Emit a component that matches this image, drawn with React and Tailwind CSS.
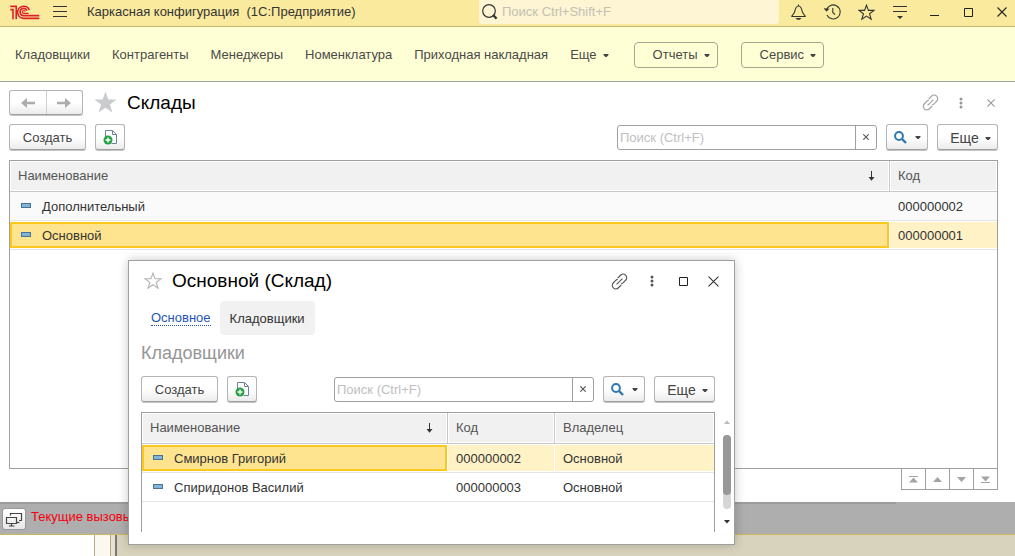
import React from 'react';

const warehouses = [
  { name: 'Дополнительный', code: '000000002' },
  { name: 'Основной', code: '000000001', selected: true },
];

const keepers = [
  { name: 'Смирнов Григорий', code: '000000002', owner: 'Основной', selected: true },
  { name: 'Спиридонов Василий', code: '000000003', owner: 'Основной' },
];

const raised =
  'rounded-[3px] border border-[#b4b4b4] border-b-[#a0a0a0] bg-linear-to-b from-white from-50% to-[#ececec] shadow-[0_1px_0_#c4c4c4]';

function Caret() {
  return (
    <svg width="6" height="6" viewBox="0 0 6 6" aria-hidden="true">
      <path d="M0.5 2h5v1L3.6 5H2.4L0.5 3z" fill="#444" />
    </svg>
  );
}

function Logo() {
  return (
    <svg width="30" height="16" viewBox="0 0 30 16" fill="none" stroke="#dc2229" strokeWidth="1.6" aria-hidden="true">
      <path d="M0.3 5.6H3V15.2" />
      <path d="M0.3 2.4H6.2V15.2" />
      <path d="M19.4 6A6.1 6.1 0 1 0 13.9 14.4H29.3" />
      <path d="M17 6.6A3.6 3.6 0 1 0 13.9 11.6H29.3" />
      <path d="M15.2 7.6A1.4 1.4 0 1 0 14 9.3H18.6" strokeWidth="1.2" />
    </svg>
  );
}

function Star({ size, fill = 'none', stroke }) {
  return (
    <svg width={size} height={size} viewBox="0 0 24 24" fill={fill} stroke={stroke} strokeWidth="1.5" aria-hidden="true">
      <path d="M12 1.5 14.7 9H22.6L16.3 13.8 18.6 21.6 12 17 5.4 21.6 7.7 13.8 1.4 9H9.3z" />
    </svg>
  );
}

function LinkIcon({ color }) {
  return (
    <svg width="17" height="17" viewBox="0 0 17 17" fill="none" stroke={color} strokeWidth="1.1" aria-hidden="true">
      <path d="M7 5.2V4.8L9.8 2A3.3 3.3 0 0 1 14.6 2.2 3.3 3.3 0 0 1 14.8 7L12 9.8A3 3 0 0 1 10.2 10.6" />
      <path d="M10 11.8V12.2L7.2 15A3.3 3.3 0 0 1 2.4 14.8 3.3 3.3 0 0 1 2.2 10L5 7.2A3 3 0 0 1 6.8 6.4" />
      <path d="M5.6 11.4 11.4 5.6" />
    </svg>
  );
}

function Dots({ color }) {
  return (
    <svg width="4" height="12" viewBox="0 0 4 12" fill={color} aria-hidden="true">
      <circle cx="2" cy="2" r="1.5" />
      <circle cx="2" cy="6" r="1.5" />
      <circle cx="2" cy="10" r="1.5" />
    </svg>
  );
}

function Cross({ size, color }) {
  return (
    <svg width={size} height={size} viewBox="0 0 10 10" stroke={color} strokeWidth={11 / size} aria-hidden="true">
      <path d="M0.5 0.5 9.5 9.5M9.5 0.5 0.5 9.5" />
    </svg>
  );
}

function Square() {
  return (
    <svg width="9" height="9" viewBox="0 0 9 9" fill="none" stroke="#222" aria-hidden="true">
      <path d="M0.5 0.5h8v8h-8z" />
    </svg>
  );
}

function Arrow({ flip }) {
  return (
    <svg width="14" height="10" viewBox="0 0 14 10" fill="#adadad" className={flip ? 'rotate-180' : ''} aria-hidden="true">
      <path d="M0 5 6 0V3.7H14V6.3H6V10z" />
    </svg>
  );
}

function CopyIcon() {
  return (
    <svg width="15" height="16" viewBox="0 0 15 16" fill="none" aria-hidden="true">
      <path d="M2.5 8V1.5H9.5L13.5 5.5V14.5H8.5" stroke="#6d8296" fill="white" />
      <path d="M9.5 1.5V5.5H13.5" stroke="#6d8296" />
      <circle cx="5" cy="11" r="4.5" fill="#28a045" />
      <path d="M5 8.5V13.5M2.5 11H7.5" stroke="white" strokeWidth="1.4" />
    </svg>
  );
}

function FindIcon() {
  return (
    <svg width="13" height="13" viewBox="0 0 13 13" fill="none" stroke="#2f78b0" aria-hidden="true">
      <circle cx="5" cy="5" r="3.9" strokeWidth="2" />
      <path d="M8 8 12 12" strokeWidth="2.4" />
    </svg>
  );
}

function Toolbar({ id }) {
  return (
    <div className="flex h-[26px] items-stretch">
      <button className={`${raised} w-[77px] pt-px text-[#444]`}>Создать</button>
      <button aria-label="Создать копированием" className={`${raised} ml-[9px] flex w-[30px] items-center justify-center`}>
        <CopyIcon />
      </button>
      <div className="ml-auto flex h-[25px] w-[260px] self-center rounded-[3px] border border-[#a0a0a0] bg-white">
        <input
          id={id}
          aria-label="Поиск"
          placeholder="Поиск (Ctrl+F)"
          className="min-w-0 flex-1 bg-transparent px-[2px] pt-px text-[13px] outline-none placeholder:text-[#c0c0c0]"
        />
        <button aria-label="Очистить" className="flex w-[21px] items-center justify-center border-l border-[#a0a0a0]">
          <Cross size={6} color="#555" />
        </button>
      </div>
      <button aria-label="Найти" className={`${raised} ml-[9px] flex w-[42px] items-center justify-center gap-2`}>
        <FindIcon />
        <Caret />
      </button>
      <button className={`${raised} ml-[9px] flex w-[61px] items-center justify-center gap-[6px] pt-px pl-[6px] text-[14px] text-[#444]`}>
        Еще
        <Caret />
      </button>
    </div>
  );
}

const th =
  'h-[31px] border-b border-[#c8c8c8] bg-[#f1f1f1] px-2 text-left font-normal text-[#555] shadow-[inset_0_0_0_1px_white]';

function Head({ children, sorted, last, className = '' }) {
  return (
    <th className={`${th} ${last ? '' : 'border-r'} ${className}`}>
      <div className="flex items-center justify-between">
        {children}
        {sorted && (
          <svg width="7" height="10" viewBox="0 0 7 10" className="mr-[6px]" aria-hidden="true">
            <path d="M3.5 0V8" stroke="#333" />
            <path d="M0.5 6H6.5L3.5 9.8z" fill="#333" />
          </svg>
        )}
      </div>
    </th>
  );
}

function NameCell({ row, striped }) {
  return (
    <td className={`h-[29px] border-b border-[#e4e4e4] p-0 ${striped ? 'bg-[#fafafa]' : ''}`}>
      <div
        className={`mr-px flex h-[26px] items-center gap-[11px] border-2 pl-[9px] ${
          row.selected ? 'border-[#fcc81e] bg-[#ffe48f]' : 'border-transparent'
        }`}
      >
        <span className="mb-px h-[5px] w-[10px] border border-[#4d7190] bg-[#7fb4dc]" />
        <span className="pt-px">{row.name}</span>
      </div>
    </td>
  );
}

function Cell({ row, striped, children, last }) {
  return (
    <td className={`h-[29px] border-b border-[#e4e4e4] p-0 ${striped ? 'bg-[#fafafa]' : ''}`}>
      <div
        className={`flex h-[26px] items-center pt-px pl-2 ${row.selected ? 'bg-[#fff2c6]' : ''} ${last ? '' : 'mr-px'}`}
      >
        {children}
      </div>
    </td>
  );
}

function Pager() {
  const icons = ['M0 6.5 4.5 1.5 9 6.5z', 'M0 6 4.5 1 9 6z', 'M0 1 4.5 6 9 1z', 'M0 0.5 4.5 5.5 9 0.5z'];
  const labels = ['В начало', 'Вверх', 'Вниз', 'В конец'];
  return (
    <div className="-mt-px flex self-end border-l border-[#a0a0a0]">
      {icons.map((d, i) => (
        <button
          key={labels[i]}
          aria-label={labels[i]}
          className="flex h-[22px] w-6 items-center justify-center border-y border-r border-[#a0a0a0]"
        >
          <svg width="9" height="7" viewBox="0 0 9 7" fill="#a4a4a4" aria-hidden="true">
            <path d={d} />
            {i === 0 && <path d="M0 0H9V1H0z" />}
            {i === 3 && <path d="M0 6H9V7H0z" />}
          </svg>
        </button>
      ))}
    </div>
  );
}

function TitleBar() {
  return (
    <header className="flex h-[27px] items-center border-b border-[#c9b870] bg-[#faea9d] pb-[2px] pl-[10px] text-[#333]">
      <Logo />
      <button aria-label="Меню" className="ml-[13px]">
        <svg width="14" height="12" viewBox="0 0 14 12" stroke="#333" aria-hidden="true">
          <path d="M0 0.5H14M0 5.5H14M0 10.5H14" />
        </svg>
      </button>
      <span className="ml-5 whitespace-pre">Каркасная конфигурация  (1С:Предприятие)</span>
      <label className="ml-auto flex h-6 w-[300px] items-center gap-1 self-start rounded-b-[3px] bg-[#fdf5d3] pl-[3px]">
        <svg width="16" height="16" viewBox="0 0 16 16" fill="none" stroke="#333" aria-hidden="true">
          <circle cx="7" cy="7" r="6.3" strokeWidth="1.2" />
          <path d="M11 11 14.6 14.6" strokeWidth="2.2" />
        </svg>
        <input
          aria-label="Поиск"
          placeholder="Поиск Ctrl+Shift+F"
          className="min-w-0 flex-1 bg-transparent text-[13px] outline-none placeholder:text-[#c4c0b4]"
        />
      </label>
      <div className="-mr-1 ml-[2px] grid w-[238px] grid-cols-7 place-items-center">
        <button aria-label="Уведомления">
          <svg width="15" height="16" viewBox="0 0 15 16" fill="none" stroke="#333" strokeWidth="1.1" aria-hidden="true">
            <path d="M7.5 0.5V2M0.8 12.5H14.2C14.2 11.2 12 10.6 11.3 7.6 10.6 4.2 9.6 2 7.5 2S4.4 4.2 3.7 7.6C3 10.6 0.8 11.2 0.8 12.5z" />
            <path d="M4.5 14H10.5L8.8 15.8H6.2z" fill="#333" stroke="none" />
          </svg>
        </button>
        <button aria-label="История">
          <svg width="17" height="16" viewBox="0 0 17 16" fill="none" stroke="#333" strokeWidth="1.1" aria-hidden="true">
            <path d="M2.4 6.2A7 7 0 1 1 2.9 11" />
            <path d="M0 4.2 2.4 7.2 5.2 4.8" fill="#333" strokeWidth="0.6" />
            <path d="M8.8 4V8.4L11 10.6" />
          </svg>
        </button>
        <button aria-label="Избранное">
          <Star size={17} stroke="#333" />
        </button>
        <button aria-label="Настройки">
          <svg width="14" height="14" viewBox="0 0 14 14" stroke="#333" aria-hidden="true">
            <path d="M0 1.5H14M0 6.5H14" />
            <path d="M4 11H10L7 14z" fill="#333" stroke="none" />
          </svg>
        </button>
        <button aria-label="Свернуть">
          <svg width="9" height="9" viewBox="0 0 9 9" stroke="#222" aria-hidden="true">
            <path d="M0 7.5H9" />
          </svg>
        </button>
        <button aria-label="Развернуть">
          <Square />
        </button>
        <button aria-label="Закрыть">
          <Cross size={10} color="#222" />
        </button>
      </div>
    </header>
  );
}

function SectionNav() {
  const items = ['Кладовщики', 'Контрагенты', 'Менеджеры', 'Номенклатура', 'Приходная накладная'];
  return (
    <nav className="flex h-[55px] items-center border-b border-[#a0a0a0] bg-[#ffffd5] pt-px pl-[15px] text-[#4a4a4a]">
      <div className="flex gap-[22px]">
        {items.map((item) => (
          <a key={item} href="#" className="whitespace-nowrap">
            {item}
          </a>
        ))}
        <button className="flex items-center gap-[6px]">
          Еще
          <Caret />
        </button>
      </div>
      <div className="ml-[25px] flex gap-[23px]">
        {['Отчеты', 'Сервис'].map((item) => (
          <button
            key={item}
            className="flex h-[26px] items-center gap-[6px] rounded-[4px] border border-[#a8a890] pr-[7px] pl-[18px]"
          >
            {item}
            <Caret />
          </button>
        ))}
      </div>
    </nav>
  );
}

function WarehousePage() {
  return (
    <main className="flex flex-col bg-white pt-2 pr-[17px] pb-3 pl-[9px]">
      <div className="flex h-[25px] items-center">
        <div className={`${raised} flex h-[25px] w-[74px]`}>
          <button aria-label="Назад" className="flex flex-1 items-center justify-center border-r border-[#d0d0d0]">
            <Arrow />
          </button>
          <button aria-label="Вперед" className="flex flex-1 items-center justify-center">
            <Arrow flip />
          </button>
        </div>
        <button aria-label="В избранное" className="ml-[10px]">
          <Star size={25} fill="#c9cbcd" stroke="none" />
        </button>
        <h1 className="ml-[9px] text-[19px] text-black">Склады</h1>
        <div className="ml-auto flex items-center">
          <button aria-label="Ссылка">
            <LinkIcon color="#a0a0a0" />
          </button>
          <button aria-label="Действия" className="ml-5">
            <Dots color="#999" />
          </button>
          <button aria-label="Закрыть" className="mr-[3px] ml-6">
            <Cross size={8} color="#999" />
          </button>
        </div>
      </div>
      <div className="mt-[9px]">
        <Toolbar id="find-warehouse" />
      </div>
      <div className="mt-[10px] min-h-[309px] border border-[#a0a0a0]">
        <table className="w-full table-fixed border-separate border-spacing-0">
          <thead>
            <tr>
              <Head sorted>Наименование</Head>
              <Head last className="w-[107px]">Код</Head>
            </tr>
          </thead>
          <tbody>
            {warehouses.map((row, i) => (
              <tr key={row.code}>
                <NameCell row={row} striped={i === 0} />
                <Cell row={row} striped={i === 0} last>
                  {row.code}
                </Cell>
              </tr>
            ))}
          </tbody>
        </table>
      </div>
      <Pager />
    </main>
  );
}

function StatusBar() {
  return (
    <div className="border-b border-[#cdb95c] bg-[#aeaeae]">
      <div className="h-[2px] w-[896px] max-w-full bg-[#9c9c9c]" />
      <div className="flex h-[30px] items-center pl-[2px]">
        <button
          aria-label="Окна"
          className="flex h-[22px] w-6 items-center justify-center rounded-[3px] border border-[#999] bg-linear-to-b from-white to-[#e8e8e8]"
        >
          <svg width="18" height="15" viewBox="0 0 18 15" fill="none" stroke="#444" strokeWidth="1.2" aria-hidden="true">
            <path d="M5.5 3.5V1.5H16.5V8.5H14" />
            <path d="M1.5 5.5H11.5V11.5H1.5zM6.5 11.5V14M4 14H9.5" />
            <path d="M12 10.5H14.5" />
          </svg>
        </button>
        <span className="ml-[5px] pb-1 whitespace-nowrap text-[#f5000f]">Текущие вызовы</span>
      </div>
    </div>
  );
}

function KeepersWindow() {
  return (
    <section
      aria-label="Основной (Склад)"
      className="absolute top-[260px] left-32 flex h-[285px] w-[607px] flex-col border border-[#a0a0a0] bg-white pr-[3px] pl-3 shadow-[0_0_10px_rgba(0,0,0,0.22)]"
    >
      <div className="flex h-10 items-center pr-3 pl-[3px]">
        <button aria-label="В избранное">
          <Star size={18} stroke="#b4b4b4" />
        </button>
        <h2 className="ml-[10px] text-[19px] text-black">Основной (Склад)</h2>
        <div className="ml-auto flex items-center">
          <button aria-label="Ссылка">
            <LinkIcon color="#555" />
          </button>
          <button aria-label="Действия" className="ml-[22px]">
            <Dots color="#555" />
          </button>
          <button aria-label="Развернуть" className="ml-[25px]">
            <Square />
          </button>
          <button aria-label="Закрыть" className="ml-5">
            <Cross size={11} color="#333" />
          </button>
        </div>
      </div>
      <div className="flex h-[34px] items-center pl-[10px]">
        <a href="#" className="border-b border-dotted border-[#1f55b5] pt-px leading-[14px] text-[#1f55b5]">
          Основное
        </a>
        <button className="ml-[9px] h-[34px] rounded-[4px] bg-[#f1f1f1] px-[10px] pt-px text-[#333]">Кладовщики</button>
      </div>
      <h3 className="mt-1 text-[18px] leading-[28px] text-[#969696]">Кладовщики</h3>
      <div className="mt-[9px] mr-4">
        <Toolbar id="find-keeper" />
      </div>
      <div className="mt-[10px] mb-3 flex flex-1 gap-2">
        <div className="flex-1 border border-b-0 border-[#a0a0a0]">
          <table className="w-full table-fixed border-separate border-spacing-0">
            <thead>
              <tr>
                <Head sorted>Наименование</Head>
                <Head className="w-[107px]">Код</Head>
                <Head last className="w-[159px]">Владелец</Head>
              </tr>
            </thead>
            <tbody>
              {keepers.map((row) => (
                <tr key={row.code}>
                  <NameCell row={row} />
                  <Cell row={row}>{row.code}</Cell>
                  <Cell row={row} last>
                    {row.owner}
                  </Cell>
                </tr>
              ))}
            </tbody>
          </table>
        </div>
        <div className="flex w-2 flex-col items-center pt-2 pb-2">
          <svg width="6" height="4" viewBox="0 0 6 4" aria-hidden="true">
            <path d="M0 4 3 0.5 6 4z" fill="#bbb" />
          </svg>
          <div className="my-[11px] w-2 flex-1 rounded-full bg-[#d6d6d6]">
            <div className="h-[60px] rounded-full bg-[#989898]" />
          </div>
          <svg width="6" height="4" viewBox="0 0 6 4" aria-hidden="true">
            <path d="M0 0H6L3 3.5z" fill="#333" />
          </svg>
        </div>
      </div>
    </section>
  );
}

export default function App() {
  return (
    <div className="relative flex min-h-screen flex-col overflow-hidden bg-[#d8d3bd] font-['Liberation_Sans',Arial,sans-serif] text-[13px] leading-[18px] text-[#333]">
      <TitleBar />
      <SectionNav />
      <WarehousePage />
      <StatusBar />
      <div className="flex flex-1">
        <div className="w-[94px] bg-white" />
        <div className="w-[17px] border-x border-[#b5ad84] bg-[#faf8f0]" />
        <div className="w-[6px] border-r-2 border-[#77777a] bg-[#e6e2cf]" />
      </div>
      <KeepersWindow />
    </div>
  );
}
